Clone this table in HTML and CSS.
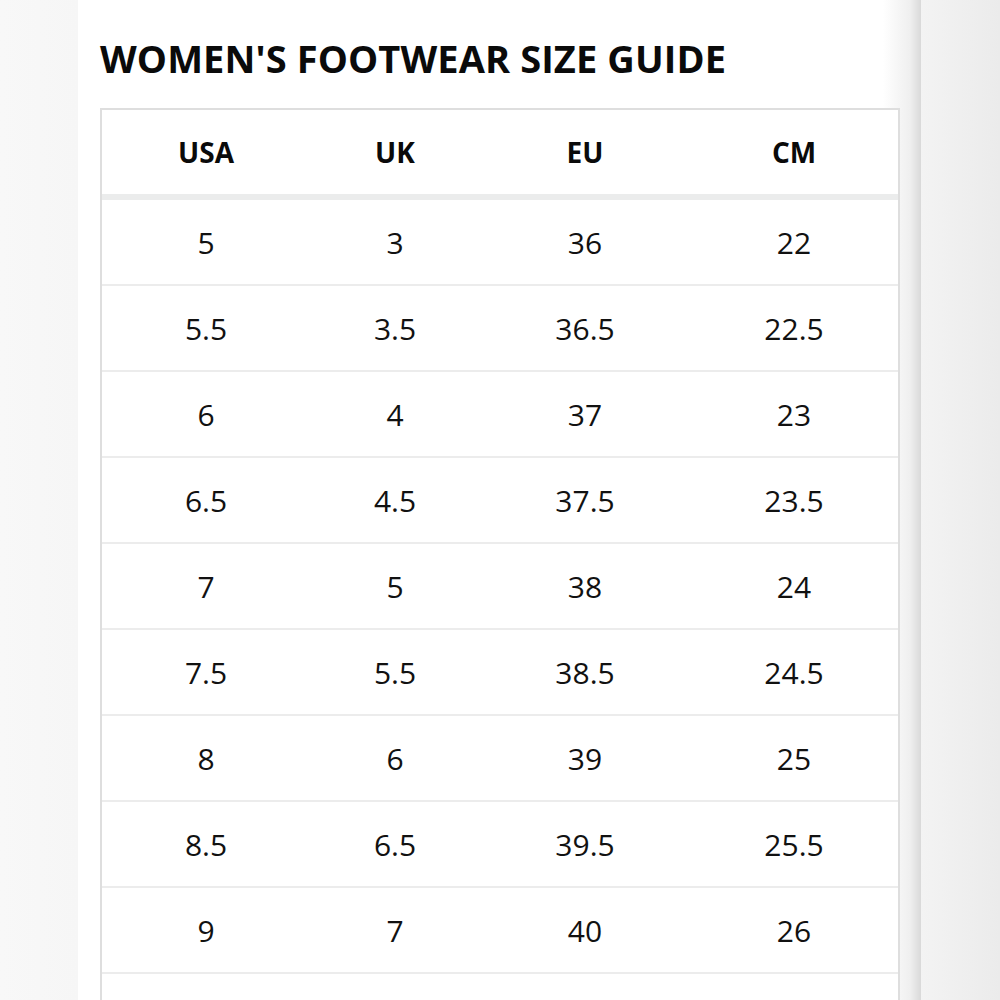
FILE: index.html
```html
<!DOCTYPE html>
<html lang="en">
<head>
<meta charset="utf-8">
<title>Women's Footwear Size Guide</title>
<link rel="stylesheet" href="styles.css">
</head>
<body>
<main class="page">
  <h1 class="title">WOMEN'S FOOTWEAR SIZE GUIDE</h1>
  <table class="sizes">
    <colgroup>
      <col class="c-usa"><col class="c-uk"><col class="c-eu"><col class="c-cm">
    </colgroup>
    <thead>
      <tr><th>USA</th><th>UK</th><th>EU</th><th>CM</th></tr>
    </thead>
    <tbody>
      <tr><td>5</td><td>3</td><td>36</td><td>22</td></tr>
      <tr><td>5.5</td><td>3.5</td><td>36.5</td><td>22.5</td></tr>
      <tr><td>6</td><td>4</td><td>37</td><td>23</td></tr>
      <tr><td>6.5</td><td>4.5</td><td>37.5</td><td>23.5</td></tr>
      <tr><td>7</td><td>5</td><td>38</td><td>24</td></tr>
      <tr><td>7.5</td><td>5.5</td><td>38.5</td><td>24.5</td></tr>
      <tr><td>8</td><td>6</td><td>39</td><td>25</td></tr>
      <tr><td>8.5</td><td>6.5</td><td>39.5</td><td>25.5</td></tr>
      <tr><td>9</td><td>7</td><td>40</td><td>26</td></tr>
      <tr class="next"><td></td><td></td><td></td><td></td></tr>
    </tbody>
  </table>
</main>
</body>
</html>
```

FILE: styles.css
```css
html, body {
  margin: 0;
  padding: 0;
}
body {
  height: 1000px;
  overflow: hidden;
  font-family: "Open Sans", "Liberation Sans", sans-serif;
  color: #0a0a0a;
  background:
    linear-gradient(to right, #f8f8f8 0, #f6f6f6 78px, #f3f3f3 921px, #ebebeb 1000px);
}
.page {
  box-sizing: border-box;
  margin-left: 78px;
  width: 843px;
  min-height: 1000px;
  padding: 36px 21px 0 22px;
  background: linear-gradient(to right, #fff 0, #fff 805px, #efefef 832px, #d9d9d9 843px);
}
.title {
  margin: 0 0 28px;
  font-size: 38px;
  line-height: 44px;
  font-weight: 700;
  color: #0a0a0a;
  letter-spacing: 0.1px;
}
.sizes {
  width: 800px;
  table-layout: fixed;
  border-collapse: separate;
  border-spacing: 0;
  border: 2px solid #dedede;
  border-bottom: 0;
  background: #fff;
}
.c-usa { width: 208px; }
.c-uk { width: 170px; }
.c-eu { width: 210px; }
.c-cm { width: 208px; }
.sizes th,
.sizes td {
  padding: 0;
  text-align: center;
  vertical-align: middle;
}
.sizes th {
  height: 84px;
  font-size: 28px;
  font-weight: 700;
  color: #0a0a0a;
  border-bottom: 6px solid #ebecec;
}
.sizes td {
  height: 84px;
  font-size: 30px;
  font-weight: 400;
  color: #111;
  border-bottom: 2px solid #ececec;
}
```
